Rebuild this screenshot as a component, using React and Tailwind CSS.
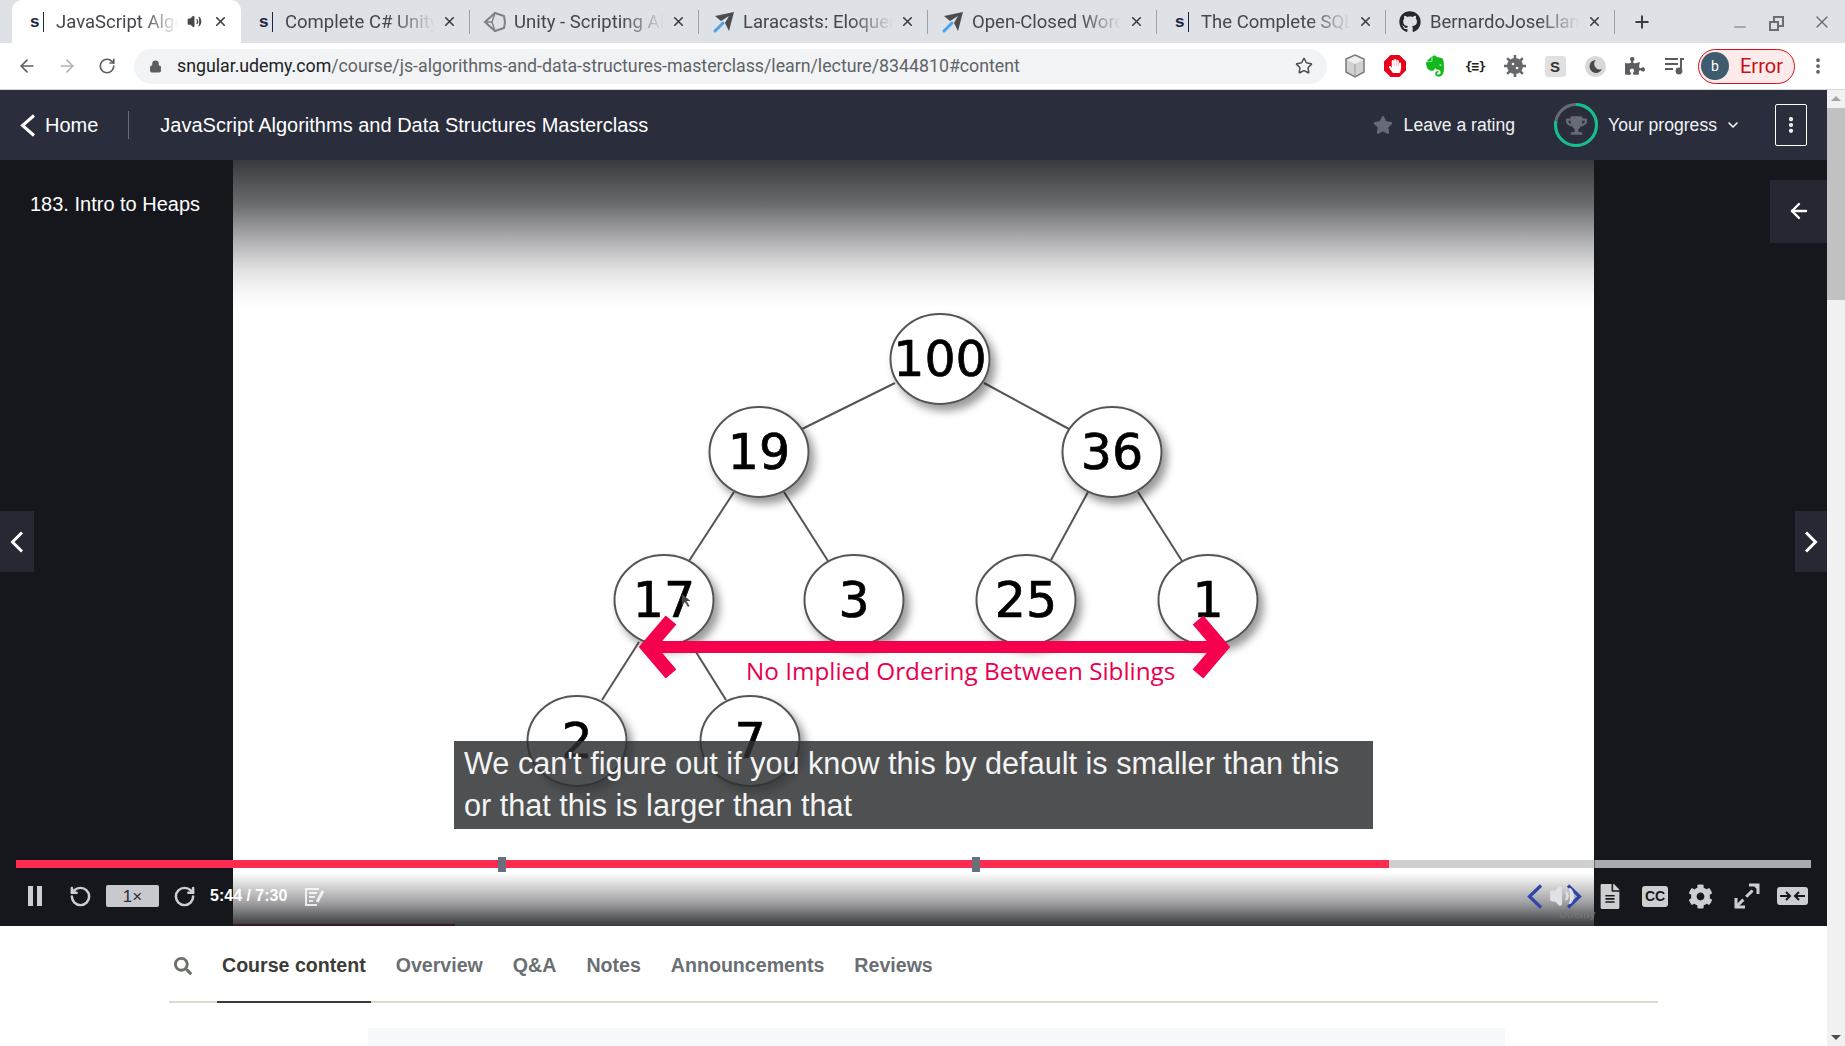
import React from "react";
import { FaGithub, FaEvernote, FaPuzzlePiece, FaTrophy, FaStar, FaHandPaper, FaSearch, FaFileAlt, FaCog } from "react-icons/fa";
import { ArrowLeft, ArrowRight, RotateCw, RotateCcw, Lock, Star, X, Plus, Minus, EllipsisVertical, ChevronDown, Volume2 } from "lucide-react";

const Chev = ({ dir = "left", w = 15, h = 22, sw = 3, color = "currentColor", className = "" }) => (
  <svg width={w} height={h} viewBox={`0 0 ${w} ${h}`} className={`shrink-0 ${className}`} fill="none" stroke={color} strokeWidth={sw}>
    <path d={dir === "left" ? `M${w - 2} 1.5L2.5 ${h / 2}L${w - 2} ${h - 1.5}` : `M2 1.5L${w - 2.5} ${h / 2}L2 ${h - 1.5}`} />
  </svg>
);

const Sfav = () => (
  <span className="flex h-[22px] w-[14px] shrink-0 items-center justify-between text-[17px] font-bold leading-none text-[#1c2540] [font-family:'Liberation_Sans',sans-serif]">
    s<span className="h-[20px] w-px bg-[#1c2540]" />
  </span>
);
const Unity = () => (
  <svg width="24" height="24" viewBox="0 0 24 24" fill="none" stroke="#7d8086" strokeWidth="2" className="shrink-0">
    <path d="M12 3l9 3 1 6-1 6-9 3-10-9z" />
    <path d="M12 3l-3 9 3 9M2 12h7" strokeWidth="1.4" />
  </svg>
);
const Plane = () => (
  <svg width="24" height="24" viewBox="0 0 24 24" className="shrink-0">
    <path d="M3 6l19-4-5 19-4-8 4-7-8 5z" fill="#4a4c50" />
    <path d="M11 13l-8 8" stroke="#4aa3ea" strokeWidth="3" strokeLinecap="round" strokeDasharray="7 1.5" />
  </svg>
);

const tabs = [
  { icon: <Sfav />, text: "JavaScript Algorithms", active: true },
  { icon: <Sfav />, text: "Complete C# Unity Developer" },
  { icon: <Unity />, text: "Unity - Scripting API", wide: true },
  { icon: <Plane />, text: "Laracasts: Eloquent", wide: true },
  { icon: <Plane />, text: "Open-Closed Word", wide: true },
  { icon: <Sfav />, text: "The Complete SQL" },
  { icon: <FaGithub className="h-[22px] w-[22px] shrink-0 text-[#24292e]" />, text: "BernardoJoseLlamas", wide: true },
];

function Tab({ t }) {
  return (
    <div className={`relative flex h-[43px] w-[229px] shrink-0 items-center pl-[18px] pr-[10px] ${t.active ? "rounded-t-[10px] bg-white" : ""}`}>
      <span className={`flex shrink-0 justify-start ${t.wide ? "-ml-[5px] w-[31px]" : "w-[26px]"}`}>{t.icon}</span>
      <span className={`overflow-hidden whitespace-nowrap pt-[1px] text-[18.5px] leading-[1.35] text-[#45474b] [mask-image:linear-gradient(to_right,#000_72%,transparent)] ${t.active ? "w-[122px]" : "w-[150px]"}`}>
        {t.text}
      </span>
      {t.active && <Volume2 className="ml-[9px] h-[15px] w-[15px] shrink-0 fill-[#45474b] text-[#45474b]" />}
      <span className="ml-auto mr-[3px] flex h-[16px] w-[16px] items-center justify-center">
        <X className="h-[15px] w-[15px] text-[#3c3d40]" strokeWidth={2.6} />
      </span>
      {!t.active && <span className="absolute right-0 top-[10px] h-[24px] w-px bg-[#9da0a5]" />}
    </div>
  );
}

const Ext = ({ children }) => <span className="flex h-[40px] w-[40px] shrink-0 items-center justify-center">{children}</span>;

function Extensions() {
  return (
    <div className="ml-[8px] flex items-center">
      <Ext>
        <svg width="22" height="24" viewBox="0 0 22 24">
          <path d="M11 1l9 4v13l-9 5-9-5V5z" fill="#d2d2d2" stroke="#7b7b7b" strokeWidth="1.5" />
          <path d="M3 6l8 4 8-4-8-4z" fill="#efefef" />
          <path d="M11 10v12" stroke="#999" />
        </svg>
      </Ext>
      <Ext>
        <span className="relative flex h-[22px] w-[22px] items-center justify-center bg-[#e8001a] [clip-path:polygon(30%_0,70%_0,100%_30%,100%_70%,70%_100%,30%_100%,0_70%,0_30%)]">
          <FaHandPaper className="h-[14px] w-[14px] text-white" />
        </span>
      </Ext>
      <Ext><FaEvernote className="h-[24px] w-[22px] text-[#14b81e]" /></Ext>
      <Ext>
        <span className="text-[13px] font-bold leading-none tracking-[-1px] text-[#222] [font-family:'DejaVu_Sans_Mono',monospace]">{"{≡}"}</span>
      </Ext>
      <Ext>
        <svg width="22" height="22" viewBox="0 0 22 22">
          <g stroke="#66676b" strokeWidth="2.6">
            <path d="M11 0v22M0 11h22M3.2 3.2l15.6 15.6M18.8 3.2L3.2 18.8" />
          </g>
          <circle cx="11" cy="11" r="8" fill="#66676b" />
          <circle cx="9" cy="9" r="1.3" fill="#fff" />
          <circle cx="13" cy="13" r="1.3" fill="#fff" />
        </svg>
      </Ext>
      <Ext>
        <span className="flex h-[21px] w-[21px] items-center justify-center rounded-[3px] bg-[#e0e0e0] text-[15px] font-bold leading-none text-[#333] [font-family:'Liberation_Sans',sans-serif]">S</span>
      </Ext>
      <Ext>
        <span className="flex h-[21px] w-[21px] items-center justify-center rounded-full bg-[#d8d8d8]">
          <svg width="13" height="13" viewBox="0 0 13 13"><path d="M7 0a6.5 6.5 0 1 0 6 9A5.5 5.5 0 0 1 7 0z" fill="#4a4a4a" /></svg>
        </span>
      </Ext>
      <Ext><FaPuzzlePiece className="h-[20px] w-[20px] text-[#5b5d60]" /></Ext>
      <Ext>
        <svg width="20" height="18" viewBox="0 0 20 18" fill="none" stroke="#5b5d60" strokeWidth="2">
          <path d="M0 2h13M0 7h13M0 12h8" />
          <path d="M16 1v13" />
          <circle cx="14" cy="14" r="2.4" fill="#5b5d60" />
          <path d="M16 2h3" />
        </svg>
      </Ext>
      <div className="ml-[3px] flex h-[35px] w-[97px] shrink-0 items-center rounded-full border border-[#d5101c] bg-[#fdeaea] pl-[2px]">
        <span className="flex h-[28px] w-[28px] items-center justify-center rounded-full bg-[#3f5b6e] text-[14px] leading-none text-white">b</span>
        <span className="ml-[11px] text-[20px] leading-none text-[#c5101c]">Error</span>
      </div>
      <EllipsisVertical className="ml-[13px] h-[20px] w-[20px] text-[#5b5d60]" strokeWidth={2.5} />
    </div>
  );
}

function Chrome() {
  return (
    <div className="shrink-0 [font-family:Roboto,sans-serif]">
      <div className="flex h-[43px] items-center bg-[#dee1e6] pl-[12px]">
        {tabs.map((t) => <Tab key={t.text} t={t} />)}
        <Plus className="ml-[17px] h-[20px] w-[20px] text-[#3c3d40]" strokeWidth={2.4} />
        <div className="ml-auto flex items-center gap-[24px] pr-[13px] text-[#6b6d70]">
          <Minus className="mt-[10px] h-[18px] w-[18px]" strokeWidth={1.6} />
          <span className="relative h-[11px] w-[11px] border-2 border-[#6b6d70] after:absolute after:bottom-[-6px] after:left-[-6px] after:h-[10px] after:w-[10px] after:border-2 after:border-[#6b6d70] after:bg-[#dee1e6] after:content-['']" />
          <X className="ml-[4px] h-[20px] w-[20px]" strokeWidth={1.6} />
        </div>
      </div>
      <div className="flex h-[47px] items-center border-b border-[#d5d7da] bg-white pl-[17px]">
        <ArrowLeft className="h-[20px] w-[20px] text-[#5b5d60]" strokeWidth={2} />
        <ArrowRight className="ml-[20px] h-[20px] w-[20px] text-[#b3b5b8]" strokeWidth={2} />
        <RotateCw className="ml-[21px] h-[18px] w-[18px] text-[#5b5d60]" strokeWidth={2.2} />
        <div className="ml-[18px] flex h-[35px] w-[1193px] items-center rounded-full bg-[#f1f3f4] pl-[15px]">
          <Lock className="h-[13px] w-[13px] fill-[#5b5d60] text-[#5b5d60]" />
          <span className="ml-[15px] whitespace-nowrap pt-[2px] text-[17.75px] leading-none text-[#5f6368]">
            <span className="text-[#202124]">sngular.udemy.com</span>/course/js-algorithms-and-data-structures-masterclass/learn/lecture/8344810#content
          </span>
          <Star className="ml-auto mr-[14px] h-[18px] w-[18px] text-[#4b4d50]" strokeWidth={2} />
        </div>
        <Extensions />
      </div>
    </div>
  );
}

function Header() {
  return (
    <div className="flex h-[70px] shrink-0 items-center bg-[#2a2d3b] text-white [font-family:'Liberation_Sans',sans-serif]">
      <Chev w={16} h={23} sw={3} className="ml-[20px]" />
      <span className="ml-[9px] text-[20px]">Home</span>
      <span className="ml-[30px] h-[28px] w-px bg-[#6a6d78]" />
      <span className="ml-[31px] text-[20px]">JavaScript Algorithms and Data Structures Masterclass</span>
      <FaStar className="ml-auto h-[20px] w-[20px] text-[#686b77]" />
      <span className="ml-[11px] text-[17.6px] text-[#f2f2f4]">Leave a rating</span>
      <span className="relative ml-[39px] flex h-[44px] w-[44px] items-center justify-center">
        <svg width="44" height="44" viewBox="0 0 44 44" className="absolute inset-0">
          <circle cx="22" cy="22" r="20.5" fill="none" stroke="#686b77" strokeWidth="3" />
          <circle cx="22" cy="22" r="20.5" fill="none" stroke="#0fc28b" strokeWidth="3" strokeDasharray="100 129" transform="rotate(-90 22 22)" />
        </svg>
        <FaTrophy className="h-[21px] w-[21px] text-[#686b77]" />
      </span>
      <span className="ml-[10px] text-[17.6px] text-[#f2f2f4]">Your progress</span>
      <ChevronDown className="ml-[8px] h-[16px] w-[16px]" strokeWidth={2.4} />
      <span className="ml-[34px] mr-[20px] flex h-[42px] w-[32px] items-center justify-center rounded-[2px] border border-white">
        <EllipsisVertical className="h-[20px] w-[20px]" strokeWidth={3} />
      </span>
    </div>
  );
}

const nodes = [
  ["100", 940, 359], ["19", 759, 452], ["36", 1112, 452],
  ["17", 664, 600], ["3", 854, 600], ["25", 1026, 600], ["1", 1208, 600],
  ["2", 577, 741], ["7", 750, 741],
];
const edges = [
  [895, 383, 802, 429], [984, 383, 1069, 429], [734, 492, 689, 561], [784, 492, 828, 561],
  [1088, 492, 1051, 560], [1138, 492, 1182, 561], [639, 642, 602, 700], [696, 652, 726, 700],
];

function Diagram() {
  return (
    <svg width="1827" height="766" viewBox="0 160 1827 766" className="absolute inset-0">
      <defs>
        <filter id="ns" x="-30%" y="-30%" width="170%" height="170%">
          <feDropShadow dx="5" dy="6" stdDeviation="4" floodColor="#000" floodOpacity="0.4" />
        </filter>
      </defs>
      {edges.map((e, i) => <line key={i} x1={e[0]} y1={e[1]} x2={e[2]} y2={e[3]} stroke="#555" strokeWidth="2" />)}
      {nodes.map(([n, x, y]) => (
        <g key={n}>
          <ellipse cx={x} cy={y} rx="49.5" ry="45" fill="#fff" stroke="#555" strokeWidth="2" filter="url(#ns)" />
          <text x={x} y={y + 17} textAnchor="middle" fontSize="49" stroke="#000" strokeWidth="0.7" fill="#000" fontFamily="'DejaVu Sans',sans-serif">{n}</text>
        </g>
      ))}
      <path d="M650 647H1219" stroke="#f5004f" strokeWidth="12" />
      <path d="M671 620L648 647L671 674M1198 620L1221 647L1198 674" fill="none" stroke="#f5004f" strokeWidth="14" />
      <text x="746" y="680" fontSize="24.27" fill="#e8004f" fontFamily="'Open Sans',sans-serif">No Implied Ordering Between Siblings</text>
      <path d="M682 594v11l3-3 3 5 1.5-1-3-5h4z" fill="#444" />
    </svg>
  );
}

const IconBtn = ({ className = "", children }) => <span className={`flex shrink-0 items-center justify-center ${className}`}>{children}</span>;

function Controls() {
  return (
    <div className="absolute bottom-0 left-0 right-0 flex h-[53px] items-center pb-[7px] pl-[28px] pr-[19px] text-[#cdced2] [font-family:'Liberation_Sans',sans-serif]">
      <span className="flex h-[20px] w-[14px] shrink-0 justify-between">
        <span className="h-full w-[5px] bg-[#cdced2]" />
        <span className="h-full w-[5px] bg-[#cdced2]" />
      </span>
      <RotateCcw className="ml-[27px] h-[23px] w-[23px]" strokeWidth={2.6} />
      <span className="ml-[14px] flex h-[22px] w-[53px] items-center justify-center rounded-[2px] bg-[#c8c9ce] text-[17px] leading-none text-[#2a2d3b]">1×</span>
      <RotateCw className="ml-[14px] h-[23px] w-[23px]" strokeWidth={2.6} />
      <span className="ml-[14px] whitespace-nowrap text-[16px] font-bold text-white">5:44 / 7:30</span>
      <svg width="21" height="21" viewBox="0 0 21 21" className="ml-[17px] opacity-80" fill="none" stroke="#fff" strokeWidth="2">
        <path d="M15 3H2v16h11M5 7h8M5 11h6M5 15h4" /><path d="M19 5l-6 11" strokeWidth="3" />
      </svg>
      <Chev w={16} h={25} sw={3.2} color="#2f45a8" className="ml-auto" />
      <span className="relative ml-[6px] flex items-center">
        <Volume2 className="h-[26px] w-[26px] fill-[#e0e1e4] text-[#e0e1e4]" />
        <span className="absolute left-[10px] top-[23px] whitespace-nowrap text-[11px] font-bold text-[#77787c] opacity-70">Udemy</span>
      </span>
      <Chev dir="right" w={16} h={25} sw={3.2} color="#2f45a8" className="ml-[-9px]" />
      <FaFileAlt className="ml-[18px] h-[25px] w-[20px]" />
      <IconBtn className="ml-[22px] h-[21px] w-[26px] rounded-[3px] bg-[#cdced2] text-[14px] font-bold leading-none text-[#16171c]">CC</IconBtn>
      <FaCog className="ml-[20px] h-[25px] w-[25px]" />
      <svg width="26" height="26" viewBox="0 0 26 26" className="ml-[21px]" fill="none" stroke="#cdced2" strokeWidth="3">
        <path d="M3 23L23 3" strokeDasharray="9 4" /><path d="M15 2h9v9M2 15v9h9" />
      </svg>
      <span className="ml-[17px] flex h-[18px] w-[31px] items-center justify-center rounded-[3px] bg-[#cdced2]">
        <svg width="25" height="12" viewBox="0 0 25 12" fill="none" stroke="#16171c" strokeWidth="2">
          <path d="M0 6h10M6 2l4 4-4 4M25 6H15M19 2l-4 4 4 4" />
        </svg>
      </span>
    </div>
  );
}

function Video() {
  return (
    <div className="relative flex h-[766px] shrink-0 overflow-hidden bg-[#16171c] [font-family:'Liberation_Sans',sans-serif]">
      <div className="w-[233px] shrink-0 pl-[30px] pt-[30px] text-[20px] leading-[28px] text-white">183. Intro to Heaps</div>
      <div className="relative h-full w-[1361px] shrink-0 bg-white">
        <div className="absolute bottom-0 left-0 right-0 h-[53px] bg-[linear-gradient(to_top,rgba(22,23,28,.85),rgba(22,23,28,.4)_45%,transparent)]" />
        <div className="absolute bottom-0 left-0 h-[2px] w-[222px] bg-[#3a1a24]" />
      </div>
      <Diagram />
      <div className="absolute left-[233px] top-0 h-[150px] w-[1361px] bg-[linear-gradient(to_bottom,rgba(22,23,28,.85),rgba(22,23,28,.63)_30%,rgba(22,23,28,.36)_52%,rgba(22,23,28,.13)_73%,rgba(22,23,28,.03)_89%,transparent)]" />
      <div className="absolute left-[454px] top-[581px] h-[88px] w-[919px] bg-[#2d2f31d7] pl-[10px] pt-[1px] text-[30.64px] leading-[42px] text-[#f4f4f4]">
        We can't figure out if you know this by default is smaller than this<br />or that this is larger than that
      </div>
      <div className="absolute left-0 top-[351px] flex h-[61px] w-[34px] items-center justify-center bg-[#262833]">
        <Chev w={14} h={22} sw={3} color="#fff" />
      </div>
      <div className="absolute right-0 top-[351px] flex h-[61px] w-[32px] items-center justify-center bg-[#262833]">
        <Chev dir="right" w={14} h={22} sw={3} color="#fff" />
      </div>
      <div className="absolute right-0 top-[20px] flex h-[63px] w-[57px] items-center justify-center bg-[#252732]">
        <ArrowLeft className="h-[24px] w-[24px] -translate-y-[1px] text-white" strokeWidth={2.4} />
      </div>
      <div className="absolute left-[16px] right-[16px] top-[700px] flex h-[8px]">
        <div className="relative h-full w-[1373px] bg-[#fb2c4f]">
          <span className="absolute left-[482px] top-[-3px] h-[15px] w-[8px] bg-[#6a6f7c]" />
          <span className="absolute left-[956px] top-[-3px] h-[15px] w-[8px] bg-[#6a6f7c]" />
        </div>
        <div className="h-full flex-1 bg-[#a9aaae91]" />
        <div className="absolute right-0 top-0 h-full w-[216px] bg-[#a9aaae]" />
      </div>
      <Controls />
    </div>
  );
}

function CourseTabs() {
  const items = ["Overview", "Q&A", "Notes", "Announcements", "Reviews"];
  return (
    <div className="flex-1 overflow-hidden bg-white [font-family:'Liberation_Sans',sans-serif]">
      <div className="ml-[169px] mr-[169px] flex h-[77px] items-center border-b-2 border-[#dcdacb] pt-[5px] text-[19.6px] font-bold text-[#6a6f73]">
        <FaSearch className="ml-[5px] h-[18px] w-[18px] text-[#6a6f6a]" />
        <span className="relative ml-[30px] flex h-full items-center whitespace-nowrap text-[#3c3b37] after:absolute after:bottom-[-2px] after:left-[-5px] after:right-[-5px] after:h-[2px] after:bg-[#3c3b37] after:content-['']">Course content</span>
        {items.map((t) => <span key={t} className="ml-[30px] whitespace-nowrap">{t}</span>)}
      </div>
      <div className="ml-[368px] mt-[25px] h-[30px] w-[1137px] bg-[#f7f8fa]" />
    </div>
  );
}

function Scrollbar() {
  return (
    <div className="flex w-[18px] shrink-0 flex-col items-center bg-[#f1f1f1] pt-[6px]">
      <span className="h-0 w-0 border-x-[5px] border-b-[5px] border-x-transparent border-b-[#a3a3a3]" />
      <span className="mt-[7px] h-[192px] w-full bg-[#c1c1c1]" />
      <span className="mb-[6px] mt-auto h-0 w-0 border-x-[5px] border-t-[5px] border-x-transparent border-t-[#505050]" />
    </div>
  );
}

export default function App() {
  return (
    <div className="flex h-[1046px] w-[1845px] flex-col overflow-hidden bg-white">
      <Chrome />
      <div className="flex min-h-0 flex-1">
        <div className="flex w-[1827px] shrink-0 flex-col">
          <Header />
          <Video />
          <CourseTabs />
        </div>
        <Scrollbar />
      </div>
    </div>
  );
}
